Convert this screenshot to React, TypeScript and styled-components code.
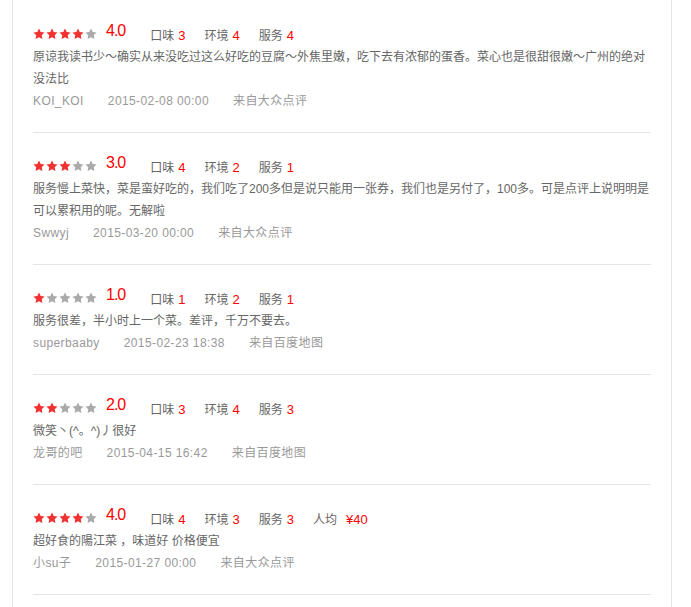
import React from 'react';
import styled, { createGlobalStyle } from 'styled-components';

const GlobalStyle = createGlobalStyle`
  body {
    margin: 0;
    background: #fff;
    font-family: 'Liberation Sans', 'Noto Sans CJK SC', sans-serif;
  }
`;

const Panel = styled.div`
  width: 660px;
  min-height: 100vh;
  margin-left: 12px;
  padding: 1px 20px 0;
  box-sizing: border-box;
  border-left: 1px solid #e5e5e5;
  border-right: 1px solid #e5e5e5;
`;

const Review = styled.div`
  padding: 21px 0 20px;
  border-bottom: 1px solid #e5e5e5;
`;

const Header = styled.div`
  display: flex;
  align-items: flex-start;
  height: 22px;
`;

const Stars = styled.div`
  display: flex;
  gap: 1px;
  margin-top: 6px;
`;

const Score = styled.span`
  margin: 1px 6px 0 9px;
  font-size: 16px;
  line-height: 16px;
  letter-spacing: -1px;
  color: #f00;
`;

const Sub = styled.div`
  display: flex;
  margin: 6px 0 0 19px;
  font-size: 12px;
  line-height: 16px;
  color: #666;
`;

const SubValue = styled.span<{ space: number }>`
  margin-left: ${(props) => props.space}px;
  font-size: 13px;
  color: #f00;
`;

const Content = styled.p`
  margin: 2px 0 0;
  font-size: 12px;
  line-height: 22px;
  color: #666;
`;

const Meta = styled.div`
  display: flex;
  font-size: 12px;
  line-height: 22px;
  letter-spacing: 0.4px;
  color: #999;
`;

const MetaItem = styled.span`
  margin-right: 24px;
`;

function Star({ on }: { on: boolean }) {
  return (
    <svg width="12" height="12" viewBox="1.1 1.1 21.8 21.8">
      <path
        d="M12 2l3.09 6.26L22 9.27l-5 4.87 1.18 6.88L12 17.77l-6.18 3.25L7 14.14 2 9.27l6.91-1.01L12 2z"
        fill={on ? '#f23131' : '#aaa'}
      />
    </svg>
  );
}

type Item = {
  rating: number;
  taste: number;
  env: number;
  service: number;
  price?: string;
  text: string;
  user: string;
  time: string;
  from: string;
};

const reviews: Item[] = [
  {
    rating: 4,
    taste: 3,
    env: 4,
    service: 4,
    text: '原谅我读书少～确实从来没吃过这么好吃的豆腐～外焦里嫩，吃下去有浓郁的蛋香。菜心也是很甜很嫩～广州的绝对没法比',
    user: 'KOI_KOI',
    time: '2015-02-08 00:00',
    from: '来自大众点评',
  },
  {
    rating: 3,
    taste: 4,
    env: 2,
    service: 1,
    text: '服务慢上菜快，菜是蛮好吃的，我们吃了200多但是说只能用一张券，我们也是另付了，100多。可是点评上说明明是可以累积用的呢。无解啦',
    user: 'Swwyj',
    time: '2015-03-20 00:00',
    from: '来自大众点评',
  },
  {
    rating: 1,
    taste: 1,
    env: 2,
    service: 1,
    text: '服务很差，半小时上一个菜。差评，千万不要去。',
    user: 'superbaaby',
    time: '2015-02-23 18:38',
    from: '来自百度地图',
  },
  {
    rating: 2,
    taste: 3,
    env: 4,
    service: 3,
    text: '微笑丶(^。^)丿很好',
    user: '龙哥的吧',
    time: '2015-04-15 16:42',
    from: '来自百度地图',
  },
  {
    rating: 4,
    taste: 4,
    env: 3,
    service: 3,
    price: '¥40',
    text: '超好食的陽江菜 ，味道好 价格便宜',
    user: '小su子',
    time: '2015-01-27 00:00',
    from: '来自大众点评',
  },
];

function App() {
  return (
    <>
      <GlobalStyle />
      <Panel>
        {reviews.map((r, i) => (
          <Review key={i}>
            <Header>
              <Stars>
                {[1, 2, 3, 4, 5].map((n) => (
                  <Star key={n} on={n <= r.rating} />
                ))}
              </Stars>
              <Score>{r.rating.toFixed(1)}</Score>
              <Sub>
                口味<SubValue space={4}>{r.taste}</SubValue>
              </Sub>
              <Sub>
                环境<SubValue space={4}>{r.env}</SubValue>
              </Sub>
              <Sub>
                服务<SubValue space={4}>{r.service}</SubValue>
              </Sub>
              {r.price && (
                <Sub>
                  人均<SubValue space={9}>{r.price}</SubValue>
                </Sub>
              )}
            </Header>
            <Content>{r.text}</Content>
            <Meta>
              <MetaItem>{r.user}</MetaItem>
              <MetaItem>{r.time}</MetaItem>
              <MetaItem>{r.from}</MetaItem>
            </Meta>
          </Review>
        ))}
      </Panel>
    </>
  );
}

export default App;
